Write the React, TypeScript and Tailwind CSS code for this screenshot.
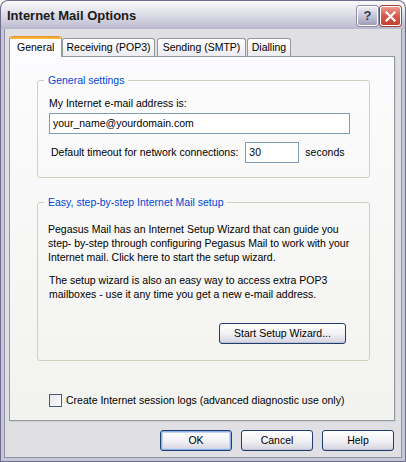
import React from 'react'

const font = { fontFamily: '"Liberation Sans", Arial, sans-serif' }

function XpButton({ label, isDefault = false, className = '' }: { label: string; isDefault?: boolean; className?: string }) {
  return (
    <button
      className={`h-[21px] rounded-[3px] border border-[#1f3d6b] bg-gradient-to-b from-white via-[#f2f2f5] to-[#d4d3e0] text-[10.5px] text-black ${
        isDefault ? 'shadow-[inset_0_0_0_1px_#8fb0e8,inset_0_0_0_2px_#c4d4f2]' : 'shadow-[inset_0_-1px_0_#c4c3d4]'
      } ${className}`}
    >
      {label}
    </button>
  )
}

function Tab({ label, active = false, className = '' }: { label: string; active?: boolean; className?: string }) {
  if (active) {
    return (
      <div
        className={`relative z-10 -mb-px flex h-[21px] flex-col rounded-t-[3px] border-x border-[#919b9c] bg-[#fcfcfe] ${className}`}
      >
        <div className="h-[3px] rounded-t-[3px] bg-gradient-to-b from-[#e68b2c] to-[#ffc73c]" />
        <div className="flex flex-1 items-start pl-[7px] pt-[1px]">{label}</div>
      </div>
    )
  }
  return (
    <div
      className={`flex h-[18px] items-center justify-center rounded-t-[3px] border-x border-t border-[#919b9c] bg-gradient-to-b from-white to-[#ecebf0] pt-[1px] ${className}`}
    >
      {label}
    </div>
  )
}

export default function App() {
  return (
    <div className="h-[462px] w-[406px] bg-white" style={font}>
      <div className="flex h-[462px] w-[406px] flex-col overflow-hidden rounded-t-[8px] bg-[#6e6e8c] p-px text-[10.5px] text-black">
        {/* title bar */}
        <div className="flex h-[28px] shrink-0 items-center rounded-t-[7px] bg-gradient-to-b from-[#fbfbfd] via-[#dcdce6] to-[#b9b9cc] pl-[6px] pr-[4px]">
          <span className="flex-1 pt-[2px] text-[13px] font-bold text-[#1a1a1a]">Internet Mail Options</span>
          <div className="mt-[2px] flex gap-[2px]">
            <div className="flex h-[20px] w-[21px] items-center justify-center rounded-[3px] border border-white bg-gradient-to-b from-[#ededf4] via-[#c6c6d8] to-[#9d9db8] text-[13px] font-bold text-[#3a3a50] shadow-[0_0_0_1px_#8a8aa6]">
              ?
            </div>
            <div className="flex h-[20px] w-[21px] items-center justify-center rounded-[3px] border border-white bg-gradient-to-b from-[#eb9b8c] via-[#d6594a] to-[#c1402f] shadow-[0_0_0_1px_#a04236]">
              <svg width="11" height="11" viewBox="0 0 11 11">
                <path d="M1.5 1.5 L9.5 9.5 M9.5 1.5 L1.5 9.5" stroke="white" strokeWidth="2.2" strokeLinecap="square" />
              </svg>
            </div>
          </div>
        </div>
        {/* body with frame */}
        <div className="flex flex-1 flex-col border-x-[3px] border-b-[3px] border-[#c6c6d6]">
          <div className="flex flex-1 flex-col border border-t-0 border-[#8f8fa8] bg-[#e0dfe3] pb-[6px] pl-[4px] pr-[6px] pt-[7px]">
            {/* tabs */}
            <div className="flex h-[20px] items-end">
              <Tab label="General" active className="w-[53px]" />
              <Tab label="Receiving (POP3)" className="w-[93px]" />
              <Tab label="Sending (SMTP)" className="ml-[2px] w-[89px]" />
              <Tab label="Dialling" className="ml-px w-[44px]" />
            </div>
            {/* panel */}
            <div className="flex h-[365px] flex-col border border-[#919b9c] bg-gradient-to-b from-[#fcfcfe] to-[#f2f2ee] pl-[27px] pr-[24px] pt-[17px] shadow-[1px_1px_0_#d0d0d8]">
              <fieldset className="min-w-0 rounded-[3px] border border-[#d0d0bf] pb-[14px] pl-[11px] pr-[19px]">
                <legend className="-ml-[5px] px-[4px] leading-[13px] text-[#0046d5]">General settings</legend>
                <div className="mt-[10px] leading-[13px]">My Internet e-mail address is:</div>
                <div className="mt-[3px] flex h-[21px] items-center border border-[#7f9db9] bg-white pl-[3px]">
                  your_name@yourdomain.com
                </div>
                <div className="mt-[8px] flex items-center whitespace-nowrap pl-[2px]">
                  <span>Default timeout for network connections:</span>
                  <div className="ml-[7px] flex h-[21px] w-[54px] items-center border border-[#7f9db9] bg-white pl-[3px]">30</div>
                  <span className="ml-[6px]">seconds</span>
                </div>
              </fieldset>
              <fieldset className="mt-[18px] min-w-0 rounded-[3px] border border-[#d0d0bf] pb-[16px] pl-[10px] pr-[23px]">
                <legend className="-ml-[4px] px-[4px] leading-[13px] text-[#0046d5]">Easy, step-by-step Internet Mail setup</legend>
                <p className="mt-[13px] whitespace-nowrap leading-[14px]">
                  Pegasus Mail has an Internet Setup Wizard that can guide you
                  <br />
                  step- by-step through configuring Pegasus Mail to work with your
                  <br />
                  Internet mail. Click here to start the setup wizard.
                </p>
                <p className="mt-[9px] whitespace-nowrap pl-px leading-[14px]">
                  The setup wizard is also an easy way to access extra POP3
                  <br />
                  mailboxes - use it any time you get a new e-mail address.
                </p>
                <div className="mt-[22px] flex justify-end">
                  <XpButton label="Start Setup Wizard..." className="w-[127px]" />
                </div>
              </fieldset>
              <div className="mt-[32px] flex items-center pl-[12px]">
                <div className="h-[13px] w-[13px] border border-[#4b5a74] bg-gradient-to-br from-[#e4e4ea] to-white" />
                <span className="ml-[4px]">Create Internet session logs (advanced diagnostic use only)</span>
              </div>
            </div>
            {/* footer buttons */}
            <div className="mt-[9px] flex justify-end gap-[9px] pr-px">
              <XpButton label="OK" isDefault className="w-[72px]" />
              <XpButton label="Cancel" className="w-[72px]" />
              <XpButton label="Help" className="w-[72px]" />
            </div>
          </div>
        </div>
      </div>
    </div>
  )
}
